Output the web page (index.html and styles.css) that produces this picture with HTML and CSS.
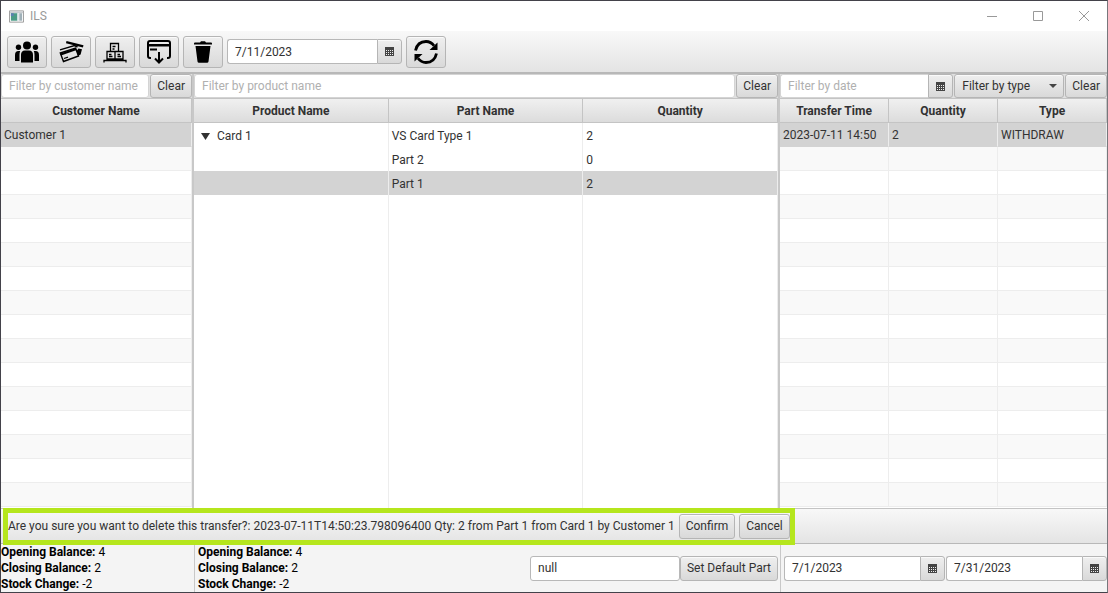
FILE: index.html
```html
<!DOCTYPE html>
<html lang="en">
<head>
<meta charset="utf-8">
<title>ILS</title>
<link rel="stylesheet" href="styles.css">
</head>
<body>
<svg class="sprite" aria-hidden="true">
  <symbol id="calendar" viewBox="0 0 9 9"><path fill="#444" d="M0 0h9v9H0z"/><path fill="#eee" d="M1 3h1v1H1zM3 3h1v1H3zM5 3h1v1H5zM7 3h1v1H7zM1 5h1v1H1zM3 5h1v1H3zM5 5h1v1H5zM7 5h1v1H7zM1 7h1v1H1zM3 7h1v1H3zM5 7h1v1H5zM7 7h1v1H7z"/></symbol>
</svg>
<div class="window">
  <header class="titlebar">
    <svg class="app-icon" viewBox="0 0 16 13"><path fill="#fff" stroke="#999" d="M.5.5h15v12H.5z"/><path fill="#c8ccd0" d="M1 1h14v2H1z"/><path fill="#4a9b86" d="M2 3h7v8H2z"/><path fill="#5b7fb0" d="M2 3h3v3H2z"/><path fill="#dfe6ea" d="M9 3h2v8H9z"/><path fill="#9fb0b8" d="M11 3h3v8h-3z"/></svg>
    <span class="title">ILS</span>
    <button class="win-btn" aria-label="Minimize"><svg viewBox="0 0 10 10"><path d="M0 5.5h10"/></svg></button>
    <button class="win-btn" aria-label="Maximize"><svg viewBox="0 0 10 10"><path d="M.5.5h9v9h-9z"/></svg></button>
    <button class="win-btn" aria-label="Close"><svg viewBox="0 0 10 10"><path d="M0 0l10 10M10 0L0 10"/></svg></button>
  </header>

  <div class="toolbar">
    <button class="tool" aria-label="Customers"><svg viewBox="0 0 24 22"><circle cx="12" cy="4.6" r="4"/><circle cx="3.5" cy="6.3" r="2.7"/><circle cx="20.500" cy="6.300" r="2.700"/><path d="M6 21.500v-7.500q0-4.500 4-4.500h4q4 0 4 4.500v7.500zM0 20v-6q0-4 3.500-4h1.700q-.7 1.500-.7 4v6zM24 20v-6q0-4-3.500-4h-1.700q.7 1.500.7 4v6z"/></svg></button>
    <button class="tool" aria-label="Cards"><svg viewBox="0 0 24 22"><path d="M7.500 0l17 4.300-.6 2.200L7 2.300z"/><path d="M1 8.800L15.500 4.500l3 1.500" fill="none" stroke="#000" stroke-width="1.400"/><path d="M19.500 7.500l3.500.800-1.400 5.200-2.600 1.500-1.500-5z"/><path d="M1.300 12L16.500 7l3 8L4.500 20.500z" fill="none" stroke="#000" stroke-width="1.400"/><path d="M1.300 12.500l15.700-5.500.7 2-15.700 5.500z"/><path d="M5 17.500l4-1.400" stroke="#000" stroke-width="1.200"/></svg></button>
    <button class="tool" aria-label="Stock"><svg viewBox="0 0 24 22"><g fill="none" stroke="#000" stroke-width="1.300"><path d="M7.500 2.500h8v8h-8zM4 10.500h8v7.500H4zM12 10.500h8v7.500h-8zM1 21.500v-2h22v2M9.500 5.500h3M9.500 8h2M6 13.500h2.500M6 15.500h3.500M14.500 13.500h2.500M14.500 15.500H18"/></g></svg></button>
    <button class="tool" aria-label="Withdraw"><svg viewBox="0 0 24 24"><g fill="none" stroke="#000" stroke-width="2"><path d="M4 18H3q-2 0-2-2V3q0-2 2-2h18q2 0 2 2v13q0 2-2 2h-1M3 9.500h7"/><path d="M12 12v10M8 18.500l4 4 4-4"/></g><path d="M1 4h22v2.500H1z"/></svg></button>
    <button class="tool" aria-label="Delete"><svg viewBox="0 0 24 22"><path d="M3 2.500q0-1 1-1h5L10 .3h4l1 1.200h5q1 0 1 1V3.500H3zM4.500 5h15l-2 15.500q-.2 1.300-1.500 1.300H8q-1.300 0-1.500-1.300z"/></svg></button>
    <div class="date date-main"><input class="field" type="text" aria-label="Transfer date" value="7/11/2023"><button class="cal" aria-label="Choose transfer date"><svg><use href="#calendar"/></svg></button></div>
    <button class="tool" aria-label="Refresh"><svg viewBox="0 0 24 24"><path d="M1.500 10.500Q3.500 1.500 12 1.500q5 0 8 4.200M22.500 13.500q-2 9-10.500 9-5 0-8-4.200" fill="none" stroke="#000" stroke-width="2.800"/><path d="M23.500 2.500V10H15.500zM.5 21.500V14H8.500z"/></svg></button>
  </div>

  <main class="panes">
    <section class="pane">
      <div class="filters"><input class="field" type="text" aria-label="Filter by customer name" placeholder="Filter by customer name"><button class="btn">Clear</button></div>
      <div class="grid">
        <table class="striped">
          <thead><tr><th>Customer Name</th></tr></thead>
          <tbody>
            <tr class="selected"><td>Customer 1</td></tr>
            <tr><td></td></tr><tr><td></td></tr><tr><td></td></tr><tr><td></td></tr><tr><td></td></tr>
            <tr><td></td></tr><tr><td></td></tr><tr><td></td></tr><tr><td></td></tr><tr><td></td></tr>
            <tr><td></td></tr><tr><td></td></tr><tr><td></td></tr><tr><td></td></tr><tr><td></td></tr>
          </tbody>
        </table>
      </div>
    </section>

    <section class="pane">
      <div class="filters"><input class="field" type="text" aria-label="Filter by product name" placeholder="Filter by product name"><button class="btn">Clear</button></div>
      <div class="grid">
        <table class="tree">
          <thead><tr><th>Product Name</th><th>Part Name</th><th>Quantity</th></tr></thead>
          <tbody>
            <tr><td><button class="twisty" aria-label="Collapse Card 1"><svg viewBox="0 0 9 7"><path d="M0 0h9L4.500 7z"/></svg></button>Card 1</td><td>VS Card Type 1</td><td>2</td></tr>
            <tr><td></td><td>Part 2</td><td>0</td></tr>
            <tr class="selected"><td></td><td>Part 1</td><td>2</td></tr>
            <tr class="filler"><td></td><td></td><td></td></tr>
          </tbody>
        </table>
      </div>
    </section>

    <section class="pane">
      <div class="filters">
        <div class="date"><input class="field" type="text" aria-label="Filter by date" placeholder="Filter by date"><button class="cal" aria-label="Choose filter date"><svg><use href="#calendar"/></svg></button></div>
        <div class="combo"><select aria-label="Filter by type"><option>Filter by type</option></select><svg viewBox="0 0 8 4"><path d="M0 0h8L4 4z"/></svg></div>
        <button class="btn">Clear</button>
      </div>
      <div class="grid">
        <table class="striped">
          <thead><tr><th>Transfer Time</th><th>Quantity</th><th>Type</th></tr></thead>
          <tbody>
            <tr class="selected"><td>2023-07-11 14:50</td><td>2</td><td>WITHDRAW</td></tr>
            <tr><td></td><td></td><td></td></tr><tr><td></td><td></td><td></td></tr><tr><td></td><td></td><td></td></tr>
            <tr><td></td><td></td><td></td></tr><tr><td></td><td></td><td></td></tr><tr><td></td><td></td><td></td></tr>
            <tr><td></td><td></td><td></td></tr><tr><td></td><td></td><td></td></tr><tr><td></td><td></td><td></td></tr>
            <tr><td></td><td></td><td></td></tr><tr><td></td><td></td><td></td></tr><tr><td></td><td></td><td></td></tr>
            <tr><td></td><td></td><td></td></tr><tr><td></td><td></td><td></td></tr><tr><td></td><td></td><td></td></tr>
          </tbody>
        </table>
      </div>
    </section>
  </main>

  <div class="confirm-bar">
    <div class="prompt">
      <span class="message">Are you sure you want to delete this transfer?: 2023-07-11T14:50:23.798096400 Qty: 2 from Part 1 from Card 1 by Customer 1</span>
      <button class="btn">Confirm</button>
      <button class="btn">Cancel</button>
    </div>
  </div>

  <footer class="summary">
    <div class="cell"><div class="totals"><div><b>Opening Balance:</b> 4</div><div><b>Closing Balance:</b> 2</div><div><b>Stock Change:</b> -2</div></div></div>
    <div class="cell cell-mid">
      <div class="totals"><div><b>Opening Balance:</b> 4</div><div><b>Closing Balance:</b> 2</div><div><b>Stock Change:</b> -2</div></div>
      <div class="default-part"><input class="field" type="text" aria-label="Default part" value="null"><button class="btn">Set Default Part</button></div>
    </div>
    <div class="cell cell-range">
      <div class="date"><input class="field" type="text" aria-label="From date" value="7/1/2023"><button class="cal" aria-label="Choose from date"><svg><use href="#calendar"/></svg></button></div>
      <div class="date"><input class="field" type="text" aria-label="To date" value="7/31/2023"><button class="cal" aria-label="Choose to date"><svg><use href="#calendar"/></svg></button></div>
    </div>
  </footer>
</div>
</body>
</html>
```

FILE: styles.css
```css
* { box-sizing: border-box; }
body { margin: 0; }
body, button, input, select {
  font-family: Roboto, "Open Sans", sans-serif;
  font-size: 12px;
  line-height: 16px;
  color: #323232;
}
button, input, select { margin: 0; border-radius: 3px; }
.sprite { position: absolute; width: 0; height: 0; }

.window {
  display: flex;
  flex-direction: column;
  height: 100vh;
  border: 1px solid #43424a;
  border-right-color: #77777c;
  background: #f4f4f4;
  overflow: hidden;
}

.titlebar { display: flex; align-items: center; flex: none; height: 30px; padding-left: 8px; background: #fff; }
.app-icon { width: 15px; height: 13px; }
.title { flex: 1; padding-left: 6px; color: #999; }
.win-btn { width: 46px; height: 30px; padding: 0; border: 0; background: none; }
.win-btn svg { display: block; width: 10px; height: 10px; margin: 0 auto; overflow: visible; fill: none; stroke: #999; }

.toolbar {
  display: flex;
  align-items: center;
  flex: none;
  gap: 4px;
  height: 43px;
  padding: 0 6px;
  border-bottom: 2px solid #b8b8b8;
  background: linear-gradient(#f8f8f8, #e4e4e4);
}
.tool, .btn, .cal, .combo select {
  border: 1px solid #b5b5b5;
  background: linear-gradient(#efefef, #d9d9d9);
  box-shadow: inset 0 1px 0 #fafafa;
}
.tool { width: 40px; height: 32px; padding: 0; }
.tool svg { display: block; width: 24px; height: 24px; margin: 0 auto; overflow: visible; }
.btn { flex: none; min-width: 41px; height: 25px; padding: 0 6px; white-space: nowrap; }

.field { flex: 1; width: 0; min-width: 0; height: 25px; padding: 0 7px; border: 1px solid #b8b8b8; background: #fff; }
.field::placeholder { color: #b0b0b0; opacity: 1; }
.date { display: flex; flex: 1; min-width: 0; }
.date .field { border-right: 0; border-radius: 3px 0 0 3px; }
.date-main { flex: none; width: 175px; }
.cal { flex: none; width: 25px; height: 25px; padding: 0; border-radius: 0 3px 3px 0; }
.cal svg { display: block; width: 9px; height: 9px; margin: 0 auto; }

.panes, .summary { display: grid; grid-template-columns: 191fr 584fr 327fr; gap: 2px; }
.panes { flex: 1; min-height: 0; background: #c8c8c8; border-bottom: 1px solid #c4c4c4; }
.pane { display: flex; flex-direction: column; min-width: 0; min-height: 0; background: #fff; }
.filters { display: flex; flex: none; gap: 1px; background: #e0e0e0; }
.filters .field, .filters .btn, .filters .cal, .filters select { height: 24px; }
.filters .field { border-color: #d4d4d4; }
.combo { position: relative; flex: none; width: 110px; }
.combo select { width: 100%; padding: 0 7px; appearance: none; }
.combo svg { position: absolute; right: 7px; top: 10px; width: 8px; height: 4px; fill: #444; pointer-events: none; }

.grid { flex: 1; min-height: 0; overflow: hidden; }
table { width: 100%; table-layout: fixed; border-collapse: separate; border-spacing: 0; }
th {
  height: 25px;
  padding: 1px 0 0;
  border: solid #c4c4c4;
  border-width: 1px 1px 1px 0;
  background: linear-gradient(#f0f0f0, #dcdcdc);
  font-weight: bold;
}
td { height: 24px; padding: 0 3px; border-right: 1px solid #ededed; white-space: nowrap; }
.striped td { border-bottom: 1px solid #ededed; }
.striped tr:nth-child(even) td { background: #f9f9f9; }
.striped .selected td, .tree .selected td { background: #d3d3d3; border-bottom-color: #d3d3d3; }
.tree { height: 100%; }
.tree td { padding-top: 2px; }
.tree .filler td { height: auto; }
.twisty { width: 9px; height: 7px; margin: 0 7px 0 4px; padding: 0; border: 0; background: none; }
.twisty svg { display: block; width: 9px; height: 7px; fill: #323232; }

.confirm-bar {
  display: flex;
  align-items: center;
  flex: none;
  height: 35px;
  padding-left: 7px;
  border-bottom: 1px solid #b8b8b8;
  background: linear-gradient(#f8f8f8, #e4e4e4);
}
.prompt { position: relative; display: flex; align-items: center; gap: 4px; height: 27px; outline: 5px solid #b5e61d; }
.message { white-space: nowrap; }

.summary { flex: none; height: 48px; }
.cell { display: flex; align-items: center; min-width: 0; }
.cell + .cell { border-left: 1px solid #c8c8c8; padding-left: 3px; }
.totals { flex: none; color: #000; }
.cell-mid { justify-content: space-between; }
.default-part { display: flex; width: 248px; }
.cell-range { gap: 1px; }
```
